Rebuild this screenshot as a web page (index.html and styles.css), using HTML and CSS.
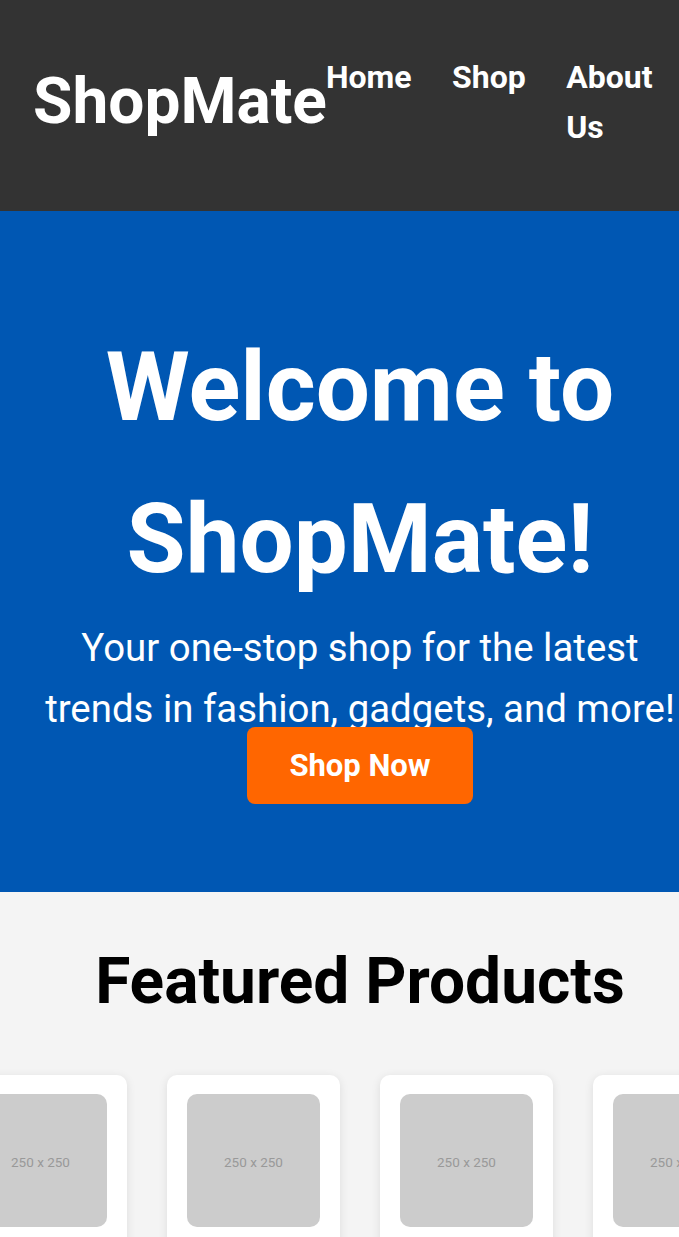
FILE: index.html
```html
<!DOCTYPE html>
<html lang="en">
<head>
<meta charset="utf-8">
<title>ShopMate</title>
<link rel="stylesheet" href="styles.css">
</head>
<body>
<header class="site-header">
  <div class="logo">ShopMate</div>
  <nav class="nav">
    <ul class="nav-list">
      <li><a href="#">Home</a></li>
      <li><a href="#">Shop</a></li>
      <li><a href="#">About Us</a></li>
    </ul>
  </nav>
</header>
<section class="hero">
  <h1 class="hero-title">Welcome to ShopMate!</h1>
  <p class="hero-text">Your one-stop shop for the latest trends in fashion, gadgets, and more!</p>
  <a class="hero-btn" href="#">Shop Now</a>
</section>
<section class="featured">
  <h2 class="featured-title">Featured Products</h2>
  <div class="products">
    <div class="card"><div class="thumb">250 x 250</div><h3 class="card-name">Product 1</h3><p class="card-price">$29.99</p></div>
    <div class="card"><div class="thumb">250 x 250</div><h3 class="card-name">Product 2</h3><p class="card-price">$39.99</p></div>
    <div class="card"><div class="thumb">250 x 250</div><h3 class="card-name">Product 3</h3><p class="card-price">$49.99</p></div>
    <div class="card"><div class="thumb">250 x 250</div><h3 class="card-name">Product 4</h3><p class="card-price">$59.99</p></div>
  </div>
</section>
</body>
</html>
```
FILE: styles.css
```css
html, body {
  margin: 0;
  padding: 0;
  overflow-x: hidden;
}
body {
  font-family: Roboto, "Liberation Sans", Arial, sans-serif;
  color: #000;
  background: #f4f4f4;
}
.site-header {
  display: flex;
  align-items: center;
  background: #333333;
  color: #fff;
  padding: 52px 24px 59px 33px;
}
.logo {
  font-size: 64px;
  font-weight: 700;
  line-height: 1.2;
  flex-shrink: 0;
}
.nav {
  flex: 1;
  min-width: 0;
  margin-left: -1px;
}
.nav-list {
  display: flex;
  gap: 40.5px;
  list-style: none;
  margin: 0;
  padding: 0;
  font-size: 32px;
  font-weight: 700;
  line-height: 50px;
}
.nav-list a {
  color: #fff;
  text-decoration: none;
}
.hero {
  background: #0057b3;
  color: #fff;
  text-align: center;
  padding: 100px 0 88px 41px;
}
.hero-title {
  margin: 0;
  font-size: 96px;
  font-weight: 700;
  line-height: 152px;
}
.hero-text {
  margin: 2px 0 0;
  font-size: 38.4px;
  line-height: 61px;
}
.hero-btn {
  display: inline-block;
  position: relative;
  margin-top: -12px;
  height: 77px;
  line-height: 77px;
  padding: 0 42px;
  background: #ff6600;
  color: #fff;
  font-size: 31px;
  font-weight: 700;
  text-decoration: none;
  border-radius: 8px;
}
.featured {
  background: #f4f4f4;
  text-align: center;
  padding: 52px 0 60px 41px;
}
.featured-title {
  margin: 0;
  font-size: 64px;
  font-weight: 700;
  line-height: 76px;
}
.products {
  display: flex;
  justify-content: center;
  gap: 40px;
  margin-top: 55px;
}
.card {
  flex: 0 0 auto;
  width: 133px;
  padding: 19px 20px 20px;
  background: #fff;
  border-radius: 10px;
  box-shadow: 0 2px 10px rgba(0, 0, 0, 0.1);
}
.thumb {
  width: 133px;
  height: 133px;
  display: flex;
  align-items: center;
  justify-content: center;
  background: #cccccc;
  color: #999;
  font-size: 13.5px;
  padding-top: 3px;
  box-sizing: border-box;
  border-radius: 10px;
}
.card-name {
  margin: 16px 0 8px;
  font-size: 20px;
}
.card-price {
  margin: 0;
  font-size: 18px;
  color: #ff6600;
}
```
